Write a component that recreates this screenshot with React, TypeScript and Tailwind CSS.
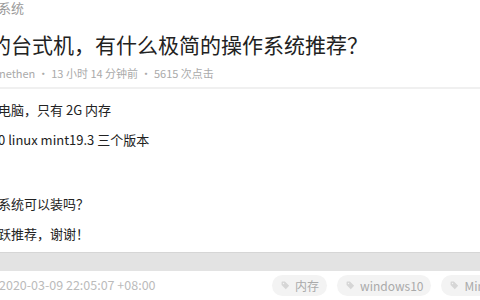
import React from "react";

const TagIcon = () => (
  <svg width="9" height="9" viewBox="0 0 16 16" className="shrink-0">
    <path
      d="M1 2.5V7l7.5 7.5 6-6L7 1H2.5A1.5 1.5 0 0 0 1 2.5z"
      fill="#d6d6d6"
    />
    <circle cx="4.5" cy="4.5" r="1.3" fill="#f3f3f3" />
  </svg>
);

function Tag({ label }: { label: string }) {
  return (
    <span className="flex items-center gap-[5px] h-[21px] pl-[9px] pr-[8px] rounded-full bg-[#f3f3f3] text-[12px] leading-[21px] text-[#aaa] whitespace-nowrap">
      <TagIcon />
      {label}
    </span>
  );
}

export default function App() {
  return (
    <div
      className="w-[480px] h-[300px] overflow-hidden bg-white"
      style={{ fontFamily: '"Noto Sans CJK SC", "Noto Sans", sans-serif' }}
    >
      {/* header */}
      <div className="pt-[1px]">
        <div className="-ml-[2px] text-[13px] leading-[14px] text-[#999]">系统</div>
        <h1 className="mt-[15px] -ml-[10px] text-[21px] leading-[28px] text-[#222] font-normal whitespace-nowrap">
          的台式机，有什么极简的操作系统推荐？
        </h1>
        <div className="mt-[7px] -ml-[1px] text-[11px] leading-[16px] text-[#aaa] whitespace-nowrap">
          nethen · 13 小时 14 分钟前 · 5615 次点击
        </div>
      </div>

      <div className="mt-[6px] h-[2px] bg-[#f0f0f0]" />

      {/* content */}
      <div className="pt-[6px] -ml-[2px] text-[13px] leading-[30px] text-[#222] whitespace-nowrap">
        <p>电脑，只有 2G 内存</p>
        <p>0 linux mint19.3 三个版本</p>
        <p className="h-[34px]" />
        <p>系统可以装吗？</p>
        <p>跃推荐，谢谢！</p>
      </div>

      {/* bar */}
      <div className="mt-[3px] h-[19px] bg-[#e3e3e3] border-t border-[#d6d6d6]" />

      {/* footer */}
      <div className="flex items-center h-[28px]">
        <span className="w-[273px] shrink-0 -ml-[1px] text-[12.5px] text-[#bbb] whitespace-nowrap">
          2020-03-09 22:05:07 +08:00
        </span>
        <div className="flex items-center gap-[10px]">
          <Tag label="内存" />
          <Tag label="windows10" />
          <Tag label="Mint" />
        </div>
      </div>
    </div>
  );
}
